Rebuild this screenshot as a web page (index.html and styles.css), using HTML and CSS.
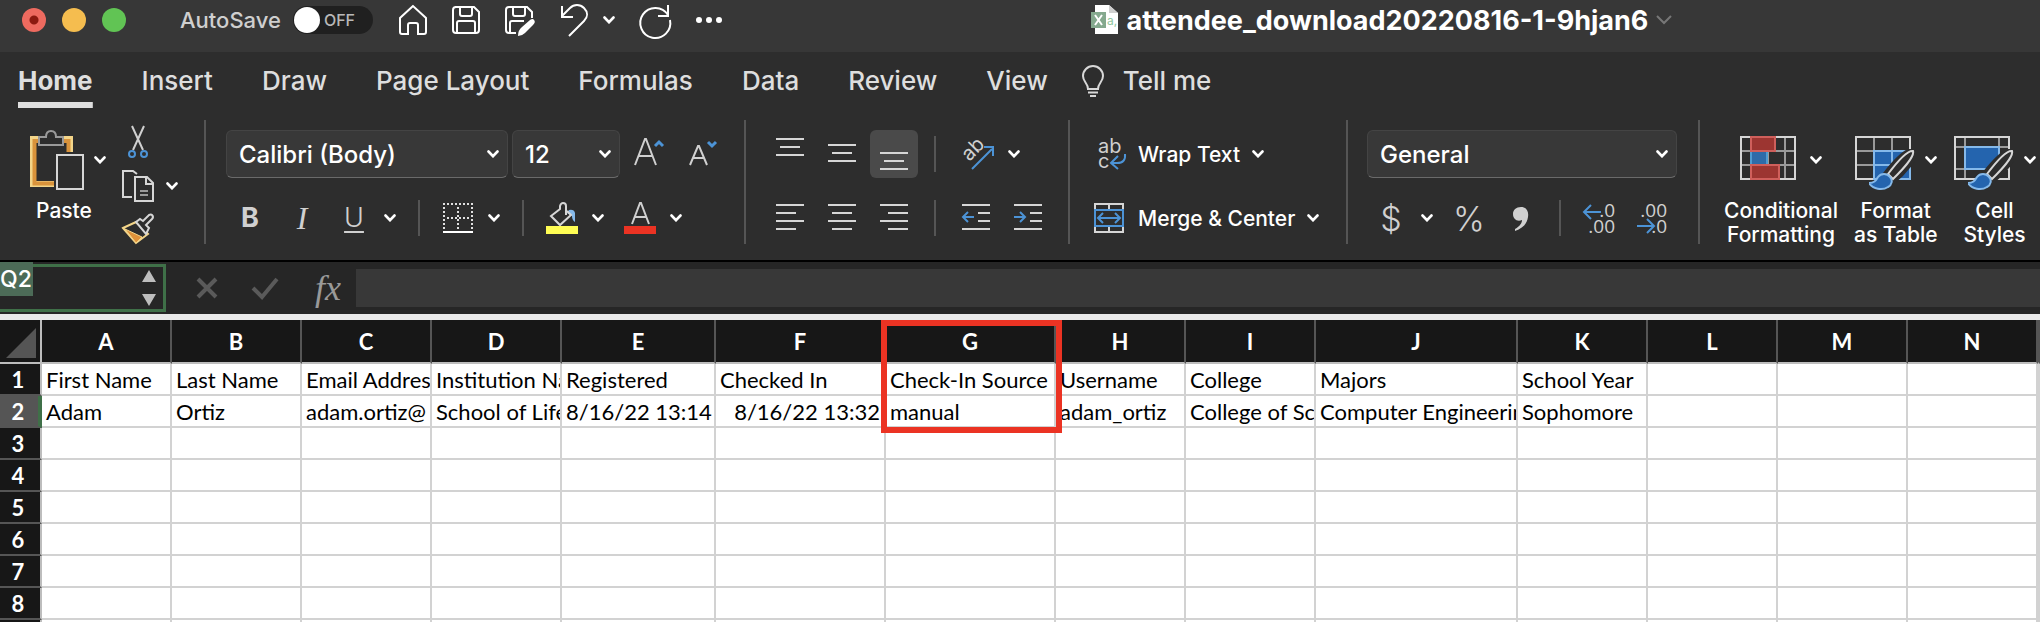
FILE: index.html
```html
<!DOCTYPE html>
<html lang="en">
<head>
    <meta charset="UTF-8">
    <meta name="viewport" content="width=device-width, initial-scale=1.0">
    <title>attendee_download20220816-1-9hjan6</title>
    <link rel="stylesheet" href="styles.css">
</head>
<body>
    <svg class="sprite" aria-hidden="true">
        <symbol id="chev" viewBox="0 0 12 8"><path d="M1.5 1.5 6 6.2 10.500 1.500" fill="none" stroke="currentColor" stroke-width="2.6" stroke-linecap="round"/></symbol>
        <symbol id="brush" viewBox="0 0 46 42">
            <path d="M45 2C38 0 24 16 17 25l7 7C34 24 48 8 45 2z" fill="#2d2d2d" stroke="#2d2d2d" stroke-width="6"/>
            <path d="M44 2C38 1 25 17 19 25l5 5C32 22 46 8 44 2z" fill="#2d2d2d" stroke="#d6d6d6" stroke-width="2"/>
            <path d="M0 34c6 0 7-3 9-6 3-4 9-4 12 0 3 3 2 8-2 10-6 4-15 2-19-4z" fill="#2464ae" stroke="#85b9ea" stroke-width="2"/>
        </symbol>
    </svg>

    <header class="titlebar">
        <div class="lights">
            <button class="light red" aria-label="Close"></button>
            <button class="light yellow" aria-label="Minimize"></button>
            <button class="light green" aria-label="Zoom"></button>
        </div>
        <div class="autosave">
            <label for="autosave">AutoSave</label>
            <label class="toggle"><input type="checkbox" id="autosave">OFF</label>
        </div>
        <div class="quick">
            <button aria-label="Home screen"><svg width="30" height="32" viewBox="0 0 30 32"><path d="M15 2 2 14v14q0 2 2 2h6V21q0-2 2-2h6q2 0 2 2v9h6q2 0 2-2V14z"/></svg></button>
            <button aria-label="Save"><svg width="30" height="32" viewBox="0 0 30 32"><path d="M4 3h19l5 5v18q0 3-3 3H5q-3 0-3-3V6q0-3 3-3zM9 3v7q0 2 2 2h8q2 0 2-2V3M6 29V19q0-2 2-2h14q2 0 2 2v10"/></svg></button>
            <button aria-label="Save as"><svg width="32" height="34" viewBox="0 0 32 34"><path d="M12 30H5q-3 0-3-3V7q0-3 3-3h18l5 5v6M9 4v7q0 2 2 2h8q2 0 2-2V4M6 30V20q0-2 2-2h12"/><path d="M14 33q0-6 4-9l8-7q3-2 4 0 2 2-1 5l-8 8q-3 3-7 3z" fill="#fff" stroke="none"/></svg></button>
            <button aria-label="Undo"><svg width="30" height="34" viewBox="0 0 30 34"><path d="M3 3v11h11M3 13 11 5c4-4 10-4 14 0s4 9 0 13L10 33"/></svg><svg class="chev" width="12" height="8"><use href="#chev"/></svg></button>
            <button aria-label="Redo"><svg width="34" height="34" viewBox="0 0 34 34"><path d="M30 2v11H20M30 12a15 15 0 1 0 2 5"/></svg></button>
            <button aria-label="More"><svg width="28" height="8" viewBox="0 0 28 8"><g fill="#fff" stroke="none"><circle cx="4" cy="4" r="3"/><circle cx="14" cy="4" r="3"/><circle cx="24" cy="4" r="3"/></g></svg></button>
        </div>
        <h1 class="doc">
            <svg width="28" height="30" viewBox="0 0 28 30"><path d="M4 0h14l9 8v21H4z" fill="#fff"/><path d="M18 0v8h9z" fill="#cfcfcf"/><path d="M0 7h15v16H0z" fill="#85a98e"/><path d="m4 10 7 10M11 10 4 20" stroke="#fff" stroke-width="2"/><text x="16" y="20" class="csv">a,</text></svg>
            attendee_download20220816-1-9hjan6
            <svg class="doc-chev" width="16" height="10" viewBox="0 0 16 10"><path d="m1 1 7 7 7-7"/></svg>
        </h1>
    </header>

    <nav class="tabs">
        <button class="tab active">Home</button>
        <button class="tab">Insert</button>
        <button class="tab">Draw</button>
        <button class="tab">Page Layout</button>
        <button class="tab">Formulas</button>
        <button class="tab">Data</button>
        <button class="tab">Review</button>
        <button class="tab">View</button>
        <button class="tab tell"><svg width="24" height="32" viewBox="0 0 24 32"><path d="M7 24c0-6-5-7-5-13a10 10 0 0 1 20 0c0 6-5 7-5 13zM7 27.500h10M9 31h6" fill="none" stroke="#d8d8d8" stroke-width="2"/></svg>Tell me</button>
    </nav>

    <div class="ribbon">
        <section class="group clipboard">
            <button class="big paste">
                <span class="pair">
                    <svg width="54" height="60" viewBox="0 0 54 60">
                        <path d="M9 9H3v45h21M33 9h7v13" fill="none" stroke="#f3d589" stroke-width="6"/>
                        <path d="M10 11H4.500v42.500H24M33 11h5.500v11" fill="none" stroke="#d9933b" stroke-width="4"/>
                        <path d="M9 15V7h7q0-6 5-6t5 6h7v8z" fill="#2d2d2d" stroke="#9a9a9a" stroke-width="2"/>
                        <path d="M27 25h26v34H27z" fill="#2d2d2d" stroke="#d6d6d6" stroke-width="2"/>
                    </svg>
                    <svg class="chev" width="12" height="8"><use href="#chev"/></svg>
                </span>
                <span>Paste</span>
            </button>
            <div class="stack">
                <button class="tool" aria-label="Cut"><svg width="32" height="32" viewBox="0 0 32 32"><path d="m10 0 11 24M22 0 11 24" stroke="#d0d0d0" stroke-width="2"/><g fill="none" stroke="#4c93d6" stroke-width="2"><circle cx="10" cy="28" r="3"/><circle cx="22" cy="28" r="3"/></g></svg></button>
                <button class="tool" aria-label="Copy"><svg width="32" height="32" viewBox="0 0 32 32"><g fill="none" stroke="#d6d6d6" stroke-width="2"><path d="M10 27H1V1h10l4 3"/><path d="M13 7h12l6 6v18H13zM24 7v7h7"/><path d="M18 21h8M18 25h8" stroke="#9a9a9a"/></g></svg><svg class="chev" width="12" height="8"><use href="#chev"/></svg></button>
                <button class="tool" aria-label="Format painter"><svg width="32" height="32" viewBox="0 0 32 32"><path d="M1 14 14 8l12 12-12 9z" fill="none" stroke="#f3d589" stroke-width="2"/><path d="m3 15 17 8-6 6z" fill="#e0923a" stroke="#f3d589"/><path d="m14 8 4-3 3 2 6-6q2-1 3 0 2 2 0 4l-6 6 3 3-3 6z" fill="#2d2d2d" stroke="#d6d6d6" stroke-width="2"/></svg></button>
            </div>
        </section>

        <section class="group font">
            <div class="row fields">
                <span class="drop"><select class="face" aria-label="Font"><option>Calibri (Body)</option></select><svg class="chev" width="12" height="8"><use href="#chev"/></svg></span>
                <span class="drop"><select class="size" aria-label="Font size"><option>12</option></select><svg class="chev" width="12" height="8"><use href="#chev"/></svg></span>
                <button class="tool pad" aria-label="Increase font size"><svg width="30" height="32" viewBox="0 0 30 32"><path d="M1 27 11 1h1l10 26M5 18h13" fill="none" stroke="#d0d0d0" stroke-width="2"/><path d="m21 8 4-4 4 4" fill="none" stroke="#4c93d6" stroke-width="3"/></svg></button>
                <button class="tool pad" aria-label="Decrease font size"><svg width="30" height="32" viewBox="0 0 30 32"><path d="M2 27 10 8h1l8 19M5 20h11" fill="none" stroke="#d0d0d0" stroke-width="2"/><path d="m20 4 4 4 4-4" fill="none" stroke="#4c93d6" stroke-width="3"/></svg></button>
            </div>
            <div class="row marks">
                <button class="tool letter bold">B</button>
                <button class="tool letter italic">I</button>
                <button class="tool"><span class="letter under">U</span><svg class="chev" width="12" height="8"><use href="#chev"/></svg></button>
                <i class="sep"></i>
                <button class="tool" aria-label="Borders"><svg width="32" height="32" viewBox="0 0 32 32"><path d="M1 2h30M2 5v22M30 5v22M16 5v22M5 16h24" fill="none" stroke="#e0e0e0" stroke-width="2" stroke-dasharray="2 2"/><path d="M1 30h30" stroke="#fff" stroke-width="2"/></svg><svg class="chev" width="12" height="8"><use href="#chev"/></svg></button>
                <i class="sep"></i>
                <button class="tool" aria-label="Fill color"><svg width="32" height="32" viewBox="0 0 32 32"><path d="M23 8q5-1 6 3v9q-3-2-3-6l-5-3z" fill="#85b9ea"/><path d="M20 13V4q0-3-3-3-2 0-3 3v3L5 14l9 9 11-10-4-4" fill="none" stroke="#d6d6d6" stroke-width="2"/><path d="M0 24h32v8H0z" fill="#fffd54"/></svg><svg class="chev" width="12" height="8"><use href="#chev"/></svg></button>
                <button class="tool" aria-label="Font color"><svg width="32" height="32" viewBox="0 0 32 32"><path d="m8 22 8-21h1l8 21M11 15h11" fill="none" stroke="#d0d0d0" stroke-width="2"/><path d="M0 24h32v8H0z" fill="#eb3323"/></svg><svg class="chev" width="12" height="8"><use href="#chev"/></svg></button>
            </div>
        </section>

        <section class="group align">
            <div class="row lines">
                <button class="tool" aria-label="Top align"><svg width="28" height="32" viewBox="0 0 28 32"><path d="M0 1h28M4 9h20M0 17h28"/></svg></button>
                <button class="tool" aria-label="Middle align"><svg width="28" height="32" viewBox="0 0 28 32"><path d="M0 7h28M4 15h20M0 23h28"/></svg></button>
                <button class="tool pressed" aria-label="Bottom align"><svg width="28" height="32" viewBox="0 0 28 32"><path d="M0 15h28M4 23h20M0 31h28"/></svg></button>
                <i class="sep"></i>
                <button class="tool" aria-label="Orientation"><svg width="32" height="32" viewBox="0 0 32 32"><text class="ab" transform="rotate(-45 10 24)" x="8" y="22">ab</text><path class="blue" d="m10 31 20-20M22 9h9v9"/></svg><svg class="chev" width="12" height="8"><use href="#chev"/></svg></button>
            </div>
            <div class="row lines">
                <button class="tool" aria-label="Align left"><svg width="28" height="32" viewBox="0 0 28 32"><path d="M0 3h28M0 11h20M0 19h28M0 27h20"/></svg></button>
                <button class="tool" aria-label="Center"><svg width="28" height="32" viewBox="0 0 28 32"><path d="M0 3h28M4 11h20M0 19h28M4 27h20"/></svg></button>
                <button class="tool" aria-label="Align right"><svg width="28" height="32" viewBox="0 0 28 32"><path d="M0 3h28M8 11h20M0 19h28M8 27h20"/></svg></button>
                <i class="sep"></i>
                <button class="tool" aria-label="Decrease indent"><svg width="28" height="32" viewBox="0 0 28 32"><path d="M0 3h28M16 11h12M16 19h12M0 27h28"/><path class="blue" d="M12 15H1M6 10l-5 5 5 5"/></svg></button>
                <button class="tool" aria-label="Increase indent"><svg width="28" height="32" viewBox="0 0 28 32"><path d="M0 3h28M16 11h12M16 19h12M0 27h28"/><path class="blue" d="M0 15h11M6 10l5 5-5 5"/></svg></button>
            </div>
        </section>

        <section class="group wrap">
            <div class="row">
                <button class="tool text"><svg width="32" height="32" viewBox="0 0 32 32"><text class="ab" x="4" y="15">ab</text><text class="ab" x="4" y="30">c</text><path class="blue" d="M31 16q1 9-8 9h-6M24 18l-7 7 7 6"/></svg>Wrap Text<svg class="chev" width="12" height="8"><use href="#chev"/></svg></button>
            </div>
            <div class="row">
                <button class="tool text"><svg width="32" height="32" viewBox="0 0 32 32"><path d="M1 2h28v28H1zM15 2v28" fill="none" stroke="#d6d6d6" stroke-width="2"/><path class="blue cover" d="M1 8h28v16H1z"/><path class="blue" d="M5 16h20M9 11l-5 5 5 5M21 11l5 5-5 5"/></svg>Merge &amp; Center<svg class="chev" width="12" height="8"><use href="#chev"/></svg></button>
            </div>
        </section>

        <section class="group number">
            <div class="row">
                <span class="drop"><select class="format" aria-label="Number format"><option>General</option></select><svg class="chev" width="12" height="8"><use href="#chev"/></svg></span>
            </div>
            <div class="row marks signs">
                <button class="tool"><span class="sign">$</span><svg class="chev" width="12" height="8"><use href="#chev"/></svg></button>
                <button class="tool sign">%</button>
                <button class="tool" aria-label="Comma style"><svg width="32" height="32" viewBox="0 0 32 32"><path d="M16 5c5 0 8 4 7 10-1 7-5 11-13 14v-2c5-3 7-6 7-9-5 2-9-1-9-6 0-4 3-7 8-7z" fill="#d0d0d0"/></svg></button>
                <i class="sep"></i>
                <button class="tool" aria-label="Increase decimal"><svg width="32" height="32" viewBox="0 0 32 32"><text class="dec" x="32" y="15">.0</text><text class="dec" x="32" y="31">.00</text><path class="blue" d="M18 10H2M8 3l-7 7 7 7"/></svg></button>
                <button class="tool" aria-label="Decrease decimal"><svg width="32" height="32" viewBox="0 0 32 32"><text class="dec" x="32" y="15">.00</text><text class="dec" x="32" y="31">.0</text><path class="blue" d="M2 24h16M12 17l7 7-7 7"/></svg></button>
            </div>
        </section>

        <section class="group styles">
            <button class="big">
                <span class="pair wide">
                    <svg width="56" height="60" viewBox="0 0 56 60">
                        <path d="M11 6v44M28 6v44M45 6v44M1 21h54M1 35h54" stroke="#9a9a9a" stroke-width="2"/><path d="M1 7h54v42H1z" fill="none" stroke="#d6d6d6" stroke-width="2"/>
                        <path d="M11 21h16v14H11z" fill="#2e6ba8" stroke="#4f9bd0" stroke-width="2"/>
                        <path d="M11 7h24v14H11zM11 35h28v14H11z" fill="#9c3531" stroke="#cf5f5b" stroke-width="2"/>
                    </svg>
                    <svg class="chev" width="12" height="8"><use href="#chev"/></svg>
                </span>
                <span>Conditional<br>Formatting</span>
            </button>
            <button class="big">
                <span class="pair">
                    <svg width="60" height="60" viewBox="0 0 60 60">
                        <path d="M19 6v44M37 6v44M1 21h54M1 35h54" stroke="#9a9a9a" stroke-width="2"/><path d="M1 7h54v42H1z" fill="none" stroke="#d6d6d6" stroke-width="2"/>
                        <path d="M19 21h36v28H19zM37 21v28M19 35h36" fill="#2464ae" stroke="#85b9ea" stroke-width="2"/>
                        <use href="#brush" x="14" y="19" width="46" height="42"/>
                    </svg>
                    <svg class="chev" width="12" height="8"><use href="#chev"/></svg>
                </span>
                <span>Format<br>as Table</span>
            </button>
            <button class="big">
                <span class="pair">
                    <svg width="60" height="60" viewBox="0 0 60 60">
                        <path d="M11 6v44M45 6v44M1 17h54M1 39h54" stroke="#9a9a9a" stroke-width="2"/><path d="M1 7h54v42H1z" fill="none" stroke="#d6d6d6" stroke-width="2"/>
                        <path d="M11 17h34v22H11z" fill="#2464ae" stroke="#85b9ea" stroke-width="2"/>
                        <use href="#brush" x="14" y="19" width="46" height="42"/>
                    </svg>
                    <svg class="chev" width="12" height="8"><use href="#chev"/></svg>
                </span>
                <span>Cell<br>Styles</span>
            </button>
        </section>
    </div>

    <div class="formula">
        <div class="namebox">
            <input class="ref" type="text" value="Q2" aria-label="Name box">
            <svg width="14" height="38" viewBox="0 0 14 38"><path d="m7 1 7 12H0zM7 37 0 25h14z" fill="#bdbdbd"/></svg>
        </div>
        <button aria-label="Cancel"><svg width="22" height="22" viewBox="0 0 22 22"><path d="m2 2 18 18M20 2 2 20"/></svg></button>
        <button aria-label="Enter"><svg width="28" height="22" viewBox="0 0 28 22"><path d="m2 11 9 9L26 2"/></svg></button>
        <button class="fx">fx</button>
        <input class="entry" type="text" aria-label="Formula bar">
    </div>

    <main class="sheet">
        <table class="grid">
            <colgroup>
                <col class="c-num"><col class="c"><col class="c"><col class="c"><col class="c"><col class="c-e"><col class="c-fg"><col class="c-fg"><col class="c"><col class="c"><col class="c-j"><col class="c"><col class="c"><col class="c"><col class="c"><col>
            </colgroup>
            <thead>
                <tr><th class="corner"><svg width="30" height="30" viewBox="0 0 30 30"><path d="M30 0v30H0z" fill="#555"/></svg></th><th>A</th><th>B</th><th>C</th><th>D</th><th>E</th><th>F</th><th class="marked">G</th><th>H</th><th>I</th><th>J</th><th>K</th><th>L</th><th>M</th><th>N</th><th></th></tr>
            </thead>
            <tbody>
                <tr><th>1</th><td>First Name</td><td>Last Name</td><td>Email Address</td><td>Institution Name</td><td>Registered</td><td>Checked In</td><td>Check-In Source</td><td>Username</td><td>College</td><td>Majors</td><td>School Year</td><td></td><td></td><td></td><td></td></tr>
                <tr class="current"><th>2</th><td>Adam</td><td>Ortiz</td><td>adam.ortiz@</td><td>School of Life</td><td class="date">8/16/22 13:14</td><td class="date">8/16/22 13:32</td><td>manual</td><td>adam_ortiz</td><td>College of Sc</td><td>Computer Engineering</td><td>Sophomore</td><td></td><td></td><td></td><td></td></tr>
                <tr><th>3</th><td></td><td></td><td></td><td></td><td></td><td></td><td></td><td></td><td></td><td></td><td></td><td></td><td></td><td></td><td></td></tr>
                <tr><th>4</th><td></td><td></td><td></td><td></td><td></td><td></td><td></td><td></td><td></td><td></td><td></td><td></td><td></td><td></td><td></td></tr>
                <tr><th>5</th><td></td><td></td><td></td><td></td><td></td><td></td><td></td><td></td><td></td><td></td><td></td><td></td><td></td><td></td><td></td></tr>
                <tr><th>6</th><td></td><td></td><td></td><td></td><td></td><td></td><td></td><td></td><td></td><td></td><td></td><td></td><td></td><td></td><td></td></tr>
                <tr><th>7</th><td></td><td></td><td></td><td></td><td></td><td></td><td></td><td></td><td></td><td></td><td></td><td></td><td></td><td></td><td></td></tr>
                <tr><th>8</th><td></td><td></td><td></td><td></td><td></td><td></td><td></td><td></td><td></td><td></td><td></td><td></td><td></td><td></td><td></td></tr>
                <tr><th></th><td></td><td></td><td></td><td></td><td></td><td></td><td></td><td></td><td></td><td></td><td></td><td></td><td></td><td></td><td></td></tr>
            </tbody>
        </table>
    </main>
</body>
</html>
```
FILE: styles.css
```css
*, *::after {
    box-sizing: border-box;
}
body {
    margin: 0;
    height: 100vh;
    overflow: hidden;
    display: flex;
    flex-direction: column;
    background: #2d2d2d;
    color: #fff;
    font-family: Inter, "Liberation Sans", sans-serif;
}
button {
    padding: 0;
    border: none;
    background: none;
    color: inherit;
    font: inherit;
}
svg {
    display: block;
    flex: none;
    overflow: visible;
}
.sprite {
    position: absolute;
    width: 0;
    height: 0;
}

/* title bar */
.titlebar {
    display: flex;
    align-items: center;
    height: 52px;
    padding: 0 0 12px 22px;
    background: #373737;
}
.lights {
    display: flex;
    gap: 16px;
}
.light {
    width: 24px;
    height: 24px;
    border-radius: 50%;
}
.red {
    background: radial-gradient(circle, #8c1a10 4px, #ee6a5f 5px);
}
.yellow {
    background: #f5bd4f;
}
.green {
    background: #61c454;
}
.autosave {
    display: flex;
    align-items: center;
    gap: 12px;
    margin-left: 54px;
    color: #cfcfcf;
    font-size: 22px;
    font-weight: 500;
}
.toggle {
    display: flex;
    align-items: center;
    gap: 4px;
    width: 80px;
    height: 28px;
    border-radius: 14px;
    background: #202020;
    color: #b8b8b8;
    font-size: 16px;
}
.toggle input {
    appearance: none;
    width: 26px;
    height: 26px;
    margin: 0 0 0 1px;
    border-radius: 50%;
    background: #fff;
}
.quick {
    display: flex;
    align-items: center;
    gap: 23px;
    margin-left: 25px;
}
.quick button {
    display: flex;
    align-items: center;
    gap: 14px;
}
.quick svg {
    fill: none;
    stroke: #fff;
    stroke-width: 2;
}
.quick .chev {
    stroke: none;
}
.doc {
    flex: 1;
    display: flex;
    align-items: center;
    justify-content: center;
    gap: 8px;
    margin: 0;
    font-size: 27px;
    font-weight: 700;
    white-space: nowrap;
}
.csv {
    fill: #8fc7a0;
    font-size: 12px;
    font-weight: 400;
}
.doc-chev {
    fill: none;
    stroke: #777;
    stroke-width: 2;
}

/* ribbon tabs */
.tabs {
    display: flex;
    align-items: center;
    gap: 49px;
    height: 68px;
    padding: 0 18px 8px;
    color: #dedede;
    font-size: 26px;
    font-weight: 500;
}
.tab {
    height: 52px;
    padding-bottom: 2px;
    line-height: 50px;
    white-space: nowrap;
}
.active {
    background: linear-gradient(#dedede, #dedede) bottom / 100% 6px no-repeat;
    font-weight: 700;
}
.tell {
    display: flex;
    align-items: center;
    gap: 18px;
    margin-left: -16px;
}

/* ribbon */
.ribbon {
    display: flex;
    height: 142px;
    padding-bottom: 16px;
    border-bottom: 2px solid #000;
}
.group {
    flex: none;
    display: flex;
    flex-direction: column;
    gap: 16px;
    padding-top: 10px;
    border-right: 2px solid #555;
}
.row {
    display: flex;
    align-items: center;
    height: 48px;
}
.tool {
    display: flex;
    align-items: center;
    gap: 14px;
}
.sep {
    width: 2px;
    height: 36px;
    margin: 0 2px;
    background: #555;
}
.blue {
    fill: none;
    stroke: #4c93d6;
    stroke-width: 2;
}
.cover {
    fill: #2d2d2d;
}
.clipboard {
    flex-direction: row;
    width: 206px;
    padding-left: 30px;
}
.big {
    display: flex;
    flex-direction: column;
    align-items: center;
    gap: 9px;
    font-size: 21px;
    font-weight: 500;
    line-height: 24px;
    white-space: nowrap;
}
.paste {
    align-items: flex-start;
}
.paste > span:last-child {
    padding-left: 6px;
}
.pair {
    display: flex;
    align-items: center;
    gap: 10px;
}
.wide {
    gap: 14px;
}
.stack {
    display: flex;
    flex-direction: column;
    gap: 12px;
    margin-top: -4px;
}
.stack .tool {
    gap: 12px;
}
.font {
    width: 540px;
}
.fields {
    gap: 4px;
    padding-left: 20px;
}
.drop {
    display: grid;
    align-items: center;
}
.drop > * {
    grid-area: 1 / 1;
}
.drop .chev {
    justify-self: end;
    margin-right: 9px;
    pointer-events: none;
}
select {
    appearance: none;
    height: 48px;
    padding: 0 12px;
    border: 1px solid #444;
    border-bottom: 1px solid #6a6a6a;
    border-radius: 6px;
    background: #383838;
    color: #fff;
    font: 500 24px Inter, "Liberation Sans", sans-serif;
}
.face {
    width: 282px;
}
.size {
    width: 108px;
}
.format {
    width: 310px;
}
.pad {
    padding: 0 10px;
}
.marks {
    gap: 20px;
    padding-left: 28px;
}
.letter {
    justify-content: center;
    width: 32px;
    color: #d0d0d0;
    font-size: 27px;
    line-height: 32px;
    text-align: center;
}
.bold {
    font-weight: 700;
}
.italic {
    font-family: "Liberation Serif", serif;
    font-style: italic;
    font-size: 32px;
}
.under {
    font-weight: 300;
    text-decoration: underline;
    text-decoration-thickness: 2px;
    text-underline-offset: 4px;
}
.align {
    width: 324px;
}
.lines {
    gap: 24px;
    padding-left: 30px;
}
.lines path:not(.blue) {
    stroke: #d6d6d6;
    stroke-width: 2;
}
.lines .chev {
    color: #fff;
}
.pressed {
    height: 48px;
    margin: 0 -10px;
    padding: 0 10px;
    border-radius: 6px;
    background: #4a4a4a;
}
.ab {
    fill: #d0d0d0;
    font: 20px Inter, sans-serif;
}
.wrap {
    width: 278px;
    padding-left: 24px;
}
.text {
    gap: 12px;
    font-size: 21px;
    font-weight: 500;
    white-space: nowrap;
}
.number {
    width: 352px;
    padding-left: 19px;
}
.signs {
    padding-left: 8px;
}
.sign {
    justify-content: center;
    width: 32px;
    color: #d0d0d0;
    font-size: 34px;
    font-weight: 300;
    text-align: center;
}
.dec {
    fill: #d0d0d0;
    font: 19px "Open Sans", sans-serif;
    text-anchor: end;
}
.styles {
    flex: 1;
    flex-direction: row;
    gap: 16px;
    padding-left: 24px;
    border-right: none;
}

/* formula bar */
.formula {
    display: flex;
    align-items: center;
    height: 52px;
    background: #262626;
}
.formula svg {
    fill: none;
    stroke: #5a5a5a;
    stroke-width: 4;
}
.namebox {
    display: flex;
    align-items: center;
    justify-content: space-between;
    width: 166px;
    height: 48px;
    padding-right: 7px;
    margin-right: 30px;
    border: 3px solid #3f7048;
    border-left: none;
}
.namebox svg {
    stroke: none;
}
.ref {
    align-self: flex-start;
    width: 33px;
    height: 34px;
    margin-top: -5px;
    padding: 0;
    border: none;
    background: #4c6b57;
    color: #fff;
    font: 500 23px Inter, sans-serif;
}
.formula button + button {
    margin-left: 33px;
}
.formula .fx {
    width: 32px;
    margin-right: 12px;
    color: #999;
    font: italic 36px/40px "Liberation Serif", serif;
}
.entry {
    flex: 1;
    height: 38px;
    padding: 0 8px;
    border: none;
    background: #383838;
    color: #fff;
    font: 22px Lato, sans-serif;
}

/* sheet */
.sheet {
    flex: 1;
    overflow: hidden;
    border-top: 6px solid #e9e9e9;
    background: #fff;
    color: #000;
}
.grid {
    width: 100%;
    table-layout: fixed;
    border-spacing: 0;
    font-family: Lato, "Noto Sans", sans-serif;
}
.c-num {
    width: 42px;
}
.c {
    width: 130px;
}
.c-e {
    width: 154px;
}
.c-fg {
    width: 170px;
}
.c-j {
    width: 202px;
}
.grid th, .grid td {
    height: 32px;
    padding: 2px 4px 0;
    border-right: 2px solid #d2d2d2;
    border-bottom: 2px solid #d2d2d2;
    font-size: 22px;
    line-height: 28px;
    text-align: left;
    white-space: nowrap;
    overflow: hidden;
}
.grid td.date {
    text-align: right;
}
.grid th {
    padding: 2px 0 0;
    border-bottom-color: #555;
    background: #171717;
    color: #fff;
    font-weight: 700;
    text-align: center;
}
.grid thead th {
    height: 44px;
    border-right-color: #555;
    border-bottom-color: #bdbdbd;
}
.grid tbody th {
    padding-right: 4px;
    border-right-color: #bdbdbd;
}
.grid thead .corner {
    padding: 4px 4px 0 6px;
    border-right-color: #bdbdbd;
}
.grid .current th {
    padding-right: 2px;
    border-right: 4px solid #3f7048;
    background: #555;
}
/* red frame over the column head and its first two rows */
.grid .marked {
    position: relative;
    overflow: visible;
}
.marked::after {
    content: "";
    position: absolute;
    top: 0;
    left: -5px;
    width: 181px;
    height: 113px;
    border: 6px solid #eb3323;
}
```
